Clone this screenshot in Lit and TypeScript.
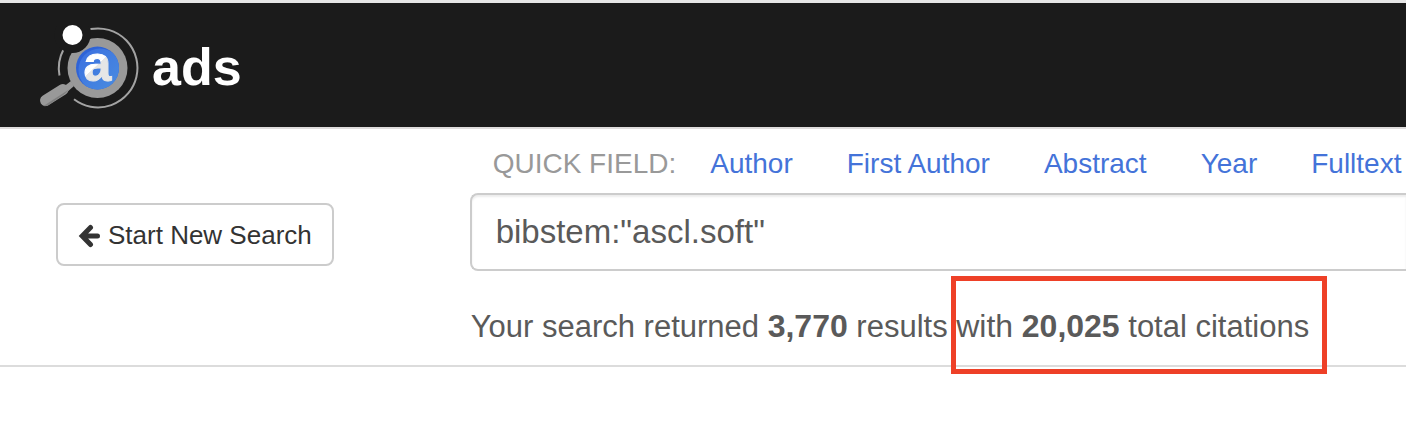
import { LitElement, html, css } from "lit";
import { customElement, state } from "lit/decorators.js";

@customElement("ads-logo")
export class AdsLogo extends LitElement {
  static styles = css`
    :host { display: block; }
    .home { display: flex; align-items: center; gap: 10px; color: #fff; text-decoration: none; }
    .mark { display: block; width: 106px; height: 90px; flex: none; }
    .name { padding-top: 4px; font-size: 52px; line-height: 60px; font-weight: 700; }
    .letter { font: 700 50px "Liberation Sans", Arial, sans-serif; }
  `;

  render() {
    return html`
      <a class="home" href="#home">
        <svg class="mark" viewBox="0 0 106 90" aria-hidden="true">
          <defs>
            <linearGradient id="lens" x1="0" y1="0" x2="1" y2="1">
              <stop offset="0" stop-color="#3b6fe0" />
              <stop offset="1" stop-color="#4a8ee0" />
            </linearGradient>
            <linearGradient id="glyph" gradientUnits="userSpaceOnUse" x1="51.5" y1="34" x2="71.5" y2="55.4">
              <stop offset="0.49" stop-color="#fff" />
              <stop offset="0.51" stop-color="#e6e6e6" />
            </linearGradient>
            <clipPath id="glass"><circle cx="61.5" cy="48" r="21.5" /></clipPath>
          </defs>
          <g fill="none" stroke="#a3a3a3" stroke-width="2">
            <path d="M54.5 9.1A39.5 39.5 0 1 1 38 79.3" />
            <path d="M27.5 29.5A39.5 39.5 0 0 0 23.5 55.5" />
          </g>
          <path d="M26 68L35 61L38 66L30 73Z" fill="#999" />
          <path d="M9.5 80.5L27 69.5" stroke="#999" stroke-width="11" stroke-linecap="round" />
          <path d="M33 69.5C31 72 29 74 25 76.5L12.5 85Q9.5 87 6.5 85.5Q10 85 12 83Z" fill="#7f7f7f" />
          <circle cx="61.5" cy="48" r="30" fill="#999" />
          <circle cx="36.5" cy="15" r="18" fill="#1b1b1b" />
          <circle cx="36.5" cy="15" r="10" fill="#fff" />
          <circle cx="61.5" cy="48" r="21.5" fill="#2f63d6" />
          <circle cx="64" cy="50" r="21.5" fill="url(#lens)" clip-path="url(#glass)" />
          <text class="letter" x="61.5" y="61" text-anchor="middle" fill="url(#glyph)" stroke="url(#glyph)" stroke-width="1">a</text>
        </svg>
        <span class="name">ads</span>
      </a>
    `;
  }
}

@customElement("app-root")
export class AppRoot extends LitElement {
  @state() private query = 'bibstem:"ascl.soft"';

  private fields = ["Author", "First Author", "Abstract", "Year", "Fulltext"];

  static styles = css`
    :host {
      display: block;
      min-height: 100vh;
      background: #fff;
      color: #5a5a5a;
      font-family: "Liberation Sans", Arial, sans-serif;
      overflow: hidden;
    }
    * { box-sizing: border-box; }
    .header {
      display: flex;
      align-items: center;
      padding: 17px 36px;
      border-top: 3px solid #e6e6e6;
      border-bottom: 2px solid #dfdddd;
      background: #1b1b1b;
      background-clip: padding-box;
    }
    .search {
      display: grid;
      grid-template-columns: minmax(0, 1fr) minmax(0, 2fr);
      border-bottom: 2px solid #dcdcdc;
    }
    .side { padding: 74px 56px 0; }
    .new-search {
      display: inline-flex;
      align-items: center;
      gap: 7px;
      padding: 15px 20px 13px;
      border: 2px solid #ccc;
      border-radius: 8px;
      background: #fff;
      color: #333;
      font: inherit;
      font-size: 26px;
      line-height: 31px;
      white-space: nowrap;
    }
    .arrow { width: 23px; height: 24px; flex: none; }
    .content { padding-left: 1px; white-space: nowrap; }
    .quick {
      display: flex;
      align-items: center;
      gap: 34px;
      padding: 19px 0 13px 23px;
      font-size: 28px;
      line-height: 32px;
    }
    .quick-label { color: #999; }
    .links { display: flex; gap: 54px; }
    .link { color: #4473d9; text-decoration: none; }
    .query {
      display: block;
      width: 100%;
      height: 78px;
      padding: 18px 24px;
      border: 2px solid #ccc;
      border-right: 0;
      border-radius: 8px 0 0 8px;
      background: #fff;
      box-shadow: inset 0 2px 2px rgba(0, 0, 0, 0.075);
      color: #5a5a5a;
      font: inherit;
      font-size: 33px;
      line-height: 38px;
      outline: none;
    }
    .summary {
      margin: 0;
      padding: 35px 0 18px 1px;
      font-size: 31px;
      line-height: 40px;
    }
    .count { font-size: 32px; font-weight: 700; }
    .with { font-size: 32px; }
    .cited { position: relative; display: inline-block; }
    .cited::after {
      content: "";
      position: absolute;
      inset: -30px -18px -27px -5px;
      border: 5px solid #ee4027;
      pointer-events: none;
    }
  `;

  private onInput(e: Event) {
    this.query = (e.target as HTMLInputElement).value;
  }

  render() {
    return html`
      <header class="header"><ads-logo></ads-logo></header>
      <main class="search">
        <div class="side">
          <button class="new-search" type="button">
            <svg class="arrow" viewBox="0 0 23 24" aria-hidden="true">
              <path d="M12.5 3.5L4.2 12L12.5 20.5M5 12H19.5" fill="none" stroke="#333" stroke-width="5" stroke-linecap="round" stroke-linejoin="miter" />
            </svg>
            Start New Search
          </button>
        </div>
        <div class="content">
          <div class="quick">
            <label class="quick-label" for="query">QUICK FIELD:</label>
            <nav class="links">
              ${this.fields.map((f) => html`<a class="link" href="#field">${f}</a>`)}
            </nav>
          </div>
          <input class="query" id="query" type="text" .value=${this.query} @input=${this.onInput} />
          <p class="summary">
            Your search returned <strong class="count">3,770</strong> results
            <span class="cited"><span class="with">with</span> <strong class="count">20,025</strong> total citations</span>
          </p>
        </div>
      </main>
    `;
  }
}
